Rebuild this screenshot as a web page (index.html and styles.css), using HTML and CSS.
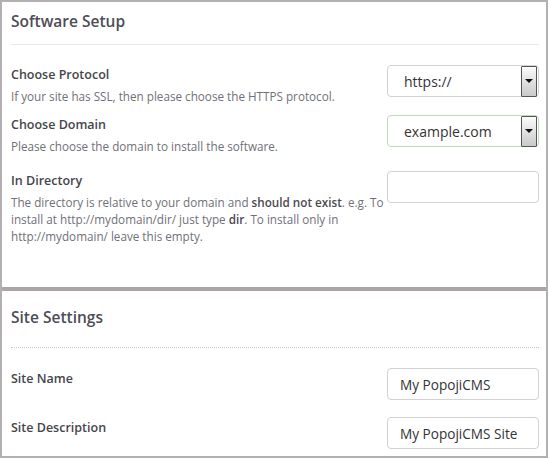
FILE: index.html
```html
<!DOCTYPE html>
<html lang="en">
<head>
  <meta charset="UTF-8">
  <meta name="viewport" content="width=device-width, initial-scale=1.0">
  <title>Install Software</title>
  <link rel="stylesheet" href="styles.css">
</head>
<body>
  <div class="frame">
    <!-- Software setup -->
    <div class="section">
      <div class="section-title">Software Setup</div>
      <div class="divider"></div>

      <div class="row row-protocol">
        <div class="field-text">
          <div class="field-label">Choose Protocol</div>
          <div class="field-help">If your site has SSL, then please choose the HTTPS protocol.</div>
        </div>
        <div class="select">
          <span class="select-value">https://</span>
          <span class="select-arrow"><span class="caret"></span></span>
        </div>
      </div>

      <div class="row row-domain">
        <div class="field-text">
          <div class="field-label">Choose Domain</div>
          <div class="field-help">Please choose the domain to install the software.</div>
        </div>
        <div class="select select-active">
          <span class="select-value">example.com</span>
          <span class="select-arrow"><span class="caret"></span></span>
        </div>
      </div>

      <div class="row row-directory">
        <div class="field-text">
          <div class="field-label">In Directory</div>
          <div class="field-help">The directory is relative to your domain and <b>should not exist</b>. e.g. To install at http://mydomain/dir/ just type <b>dir</b>. To install only in http://mydomain/ leave this empty.</div>
        </div>
        <div class="input"></div>
      </div>
    </div>

    <!-- Site settings -->
    <div class="section section-site">
      <div class="section-title">Site Settings</div>
      <div class="divider divider-dotted"></div>

      <div class="row row-name">
        <div class="field-text">
          <div class="field-label">Site Name</div>
        </div>
        <div class="input">My PopojiCMS</div>
      </div>

      <div class="row row-desc">
        <div class="field-text">
          <div class="field-label">Site Description</div>
        </div>
        <div class="input">My PopojiCMS Site</div>
      </div>
    </div>
  </div>
</body>
</html>
```

FILE: styles.css
```css
* {
  margin: 0;
  padding: 0;
  box-sizing: border-box;
}

body {
  background-color: #ffffff;
  font-family: "Open Sans", "Noto Sans", sans-serif;
  color: #444;
}

.frame {
  width: 548px;
  height: 458px;
  border: 2px solid #b3afb3;
  background-color: #fff;
  overflow: hidden;
}

.section {
  padding: 0 7px 0 9px;
}

.section-title {
  font-size: 15.5px;
  font-weight: 600;
  color: #4d4d57;
  line-height: 22px;
  padding-top: 8px;
  height: 42px;
}

.divider {
  border-top: 1px solid #e3e8e8;
}

.divider-dotted {
  border-top: 1px dotted #c8c8c8;
}

.row {
  display: flex;
  align-items: flex-start;
}

.row-protocol {
  margin-top: 20px;
}

.row-domain {
  margin-top: 10px;
}

.row-directory {
  margin-top: 16px;
  padding-bottom: 42px;
}

.field-text {
  flex: 1;
}

.field-label {
  font-size: 12.5px;
  font-weight: 600;
  color: #45454c;
  line-height: 20px;
}

.field-help {
  font-size: 11.7px;
  color: #707078;
  line-height: 17px;
  margin-top: 3px;
}

.field-help b {
  font-weight: 600;
  color: #4a4a50;
}

.select,
.input {
  width: 152px;
  height: 32px;
  flex-shrink: 0;
  border: 1px solid #d2d2d2;
  border-radius: 4px;
  display: flex;
  align-items: center;
  font-size: 14px;
  color: #333;
}

.select {
  justify-content: space-between;
  padding-left: 16px;
}

.select-active {
  border-color: #bcdcbc;
}

.select-arrow {
  width: 16px;
  height: 31px;
  margin-right: 1px;
  border: 1px solid #555;
  border-radius: 1px;
  background: linear-gradient(to bottom, #fbfbfb, #c9c9c9);
  display: flex;
  align-items: center;
  justify-content: center;
}

.caret {
  width: 0;
  height: 0;
  border-left: 4px solid transparent;
  border-right: 4px solid transparent;
  border-top: 4px solid #111;
}

.input {
  padding-left: 12px;
  font-size: 13.6px;
}

.section-site {
  border-top: 4px solid #a9a5a9;
}

.section-site .section-title {
  padding-top: 15px;
  height: 56px;
}

.row-name {
  margin-top: 20px;
}

.row-name .field-label,
.row-desc .field-label {
  padding-top: 1px;
}

.row-desc {
  margin-top: 17px;
}
```
